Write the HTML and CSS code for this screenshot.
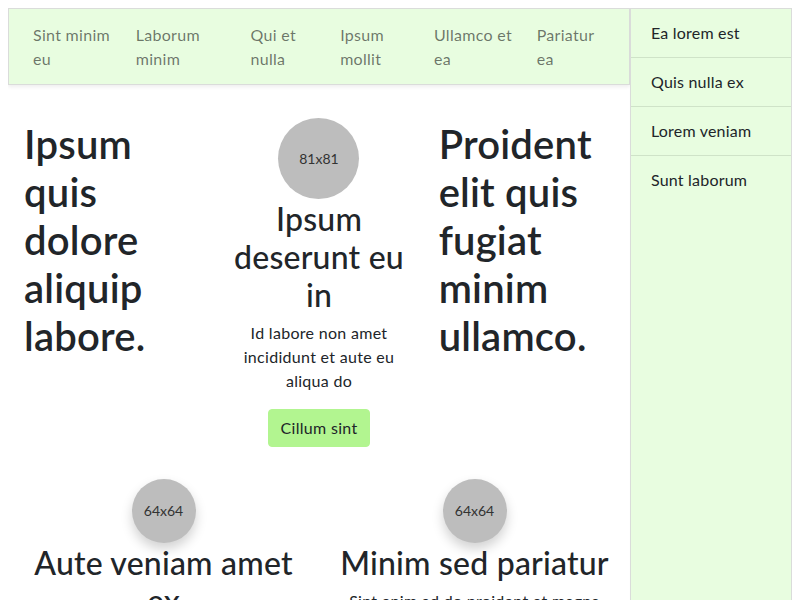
FILE: index.html
```html
<!DOCTYPE html>
<html lang="en">
<head>
<meta charset="utf-8">
<title>Page</title>
<link rel="stylesheet" href="styles.css">
</head>
<body>
<div class="layout">
  <main class="main">
    <nav class="topnav">
      <ul class="nav-list">
        <li><a class="nav-link" href="#">Sint minim eu</a></li>
        <li><a class="nav-link" href="#">Laborum minim</a></li>
        <li><a class="nav-link" href="#">Qui et nulla</a></li>
        <li><a class="nav-link" href="#">Ipsum mollit</a></li>
        <li><a class="nav-link" href="#">Ullamco et ea</a></li>
        <li><a class="nav-link" href="#">Pariatur ea</a></li>
      </ul>
    </nav>
    <section class="row-three">
      <div class="col">
        <h1 class="big">Ipsum quis dolore aliquip labore.</h1>
      </div>
      <div class="col center">
        <div class="avatar avatar-lg">81x81</div>
        <h2 class="title">Ipsum deserunt eu in</h2>
        <p class="text">Id labore non amet incididunt et aute eu aliqua do</p>
        <a class="btn" href="#">Cillum sint</a>
      </div>
      <div class="col">
        <h1 class="big">Proident elit quis fugiat minim ullamco.</h1>
      </div>
    </section>
    <section class="row-two">
      <div class="col center">
        <div class="avatar avatar-sm">64x64</div>
        <h2 class="title">Aute veniam amet ex</h2>
        <p class="text">Sint enim ad do proident et magna aliqua</p>
      </div>
      <div class="col center">
        <div class="avatar avatar-sm">64x64</div>
        <h2 class="title">Minim sed pariatur</h2>
        <p class="text">Sint enim ad do proident et magna aliqua</p>
      </div>
    </section>
  </main>
  <aside class="sidebar">
    <ul class="side-list">
      <li><a class="side-link" href="#">Ea lorem est</a></li>
      <li><a class="side-link" href="#">Quis nulla ex</a></li>
      <li><a class="side-link" href="#">Lorem veniam</a></li>
      <li><a class="side-link" href="#">Sunt laborum</a></li>
    </ul>
  </aside>
</div>
</body>
</html>
```

FILE: styles.css
```css
* { box-sizing: border-box; }
body {
  margin: 8px;
  font-family: Lato, "Open Sans", sans-serif;
  font-size: 16px;
  line-height: 24px;
  color: #212529;
  background: #fff;
}
a { text-decoration: none; }
.layout {
  display: flex;
  align-items: stretch;
}
.main {
  flex: 1 1 auto;
  min-width: 0;
  padding-bottom: 40px;
}
.topnav {
  background: #e8fde0;
  border: 1px solid #dadcda;
  box-shadow: 0 2px 4px rgba(0,0,0,0.07);
  padding: 14px 16px 13px;
}
.nav-list {
  list-style: none;
  margin: 0;
  padding: 0;
  display: flex;
}
.nav-list li { flex: 1 1 auto; }
.nav-link {
  display: block;
  padding: 0 8px;
  color: rgba(0,0,0,0.55);
  letter-spacing: 0.3px;
}
.row-three {
  display: grid;
  grid-template-columns: 1fr 1fr 1fr;
  padding-top: 33px;
}
.row-two {
  display: grid;
  grid-template-columns: 1fr 1fr;
  padding-top: 32px;
}
.col { padding: 0 16px; }
.center {
  display: flex;
  flex-direction: column;
  align-items: center;
  text-align: center;
}
.big {
  margin: 0;
  padding-top: 2px;
  font-size: 40px;
  line-height: 48px;
  font-weight: 600;
  letter-spacing: 0.2px;
}
.title {
  margin: 1px 0 7px;
  font-size: 32px;
  line-height: 38px;
  font-weight: 500;
  letter-spacing: 0.2px;
}
.text {
  margin: 0 0 16px;
  letter-spacing: 0.3px;
}
.avatar {
  border-radius: 50%;
  background: #bdbdbd;
  color: #333;
  display: flex;
  align-items: center;
  justify-content: center;
  font-size: 14px;
}
.avatar-lg { width: 81px; height: 81px; }
.avatar-sm {
  width: 64px;
  height: 64px;
  box-shadow: 0 6px 12px rgba(0,0,0,0.18);
}
.btn {
  display: inline-block;
  background: #b2f590;
  color: #212529;
  border: 1px solid #b2f590;
  border-radius: 4px;
  padding: 6px 12px;
  line-height: 24px;
  letter-spacing: 0.3px;
}
.sidebar {
  flex: 0 0 162px;
  background: #e8fde0;
  border-top: 1px solid #dadcda;
  border-left: 1px solid #dadcda;
  border-right: 1px solid #dadcda;
  box-shadow: 2px 0 4px rgba(0,0,0,0.04);
}
.side-list {
  list-style: none;
  margin: 0;
  padding: 0;
}
.side-list li { border-bottom: 1px solid #cfe3c8; }
.side-list li:last-child { border-bottom: 0; }
.side-link {
  display: block;
  padding: 12px 20px;
  color: #212529;
  letter-spacing: 0.2px;
}
```
